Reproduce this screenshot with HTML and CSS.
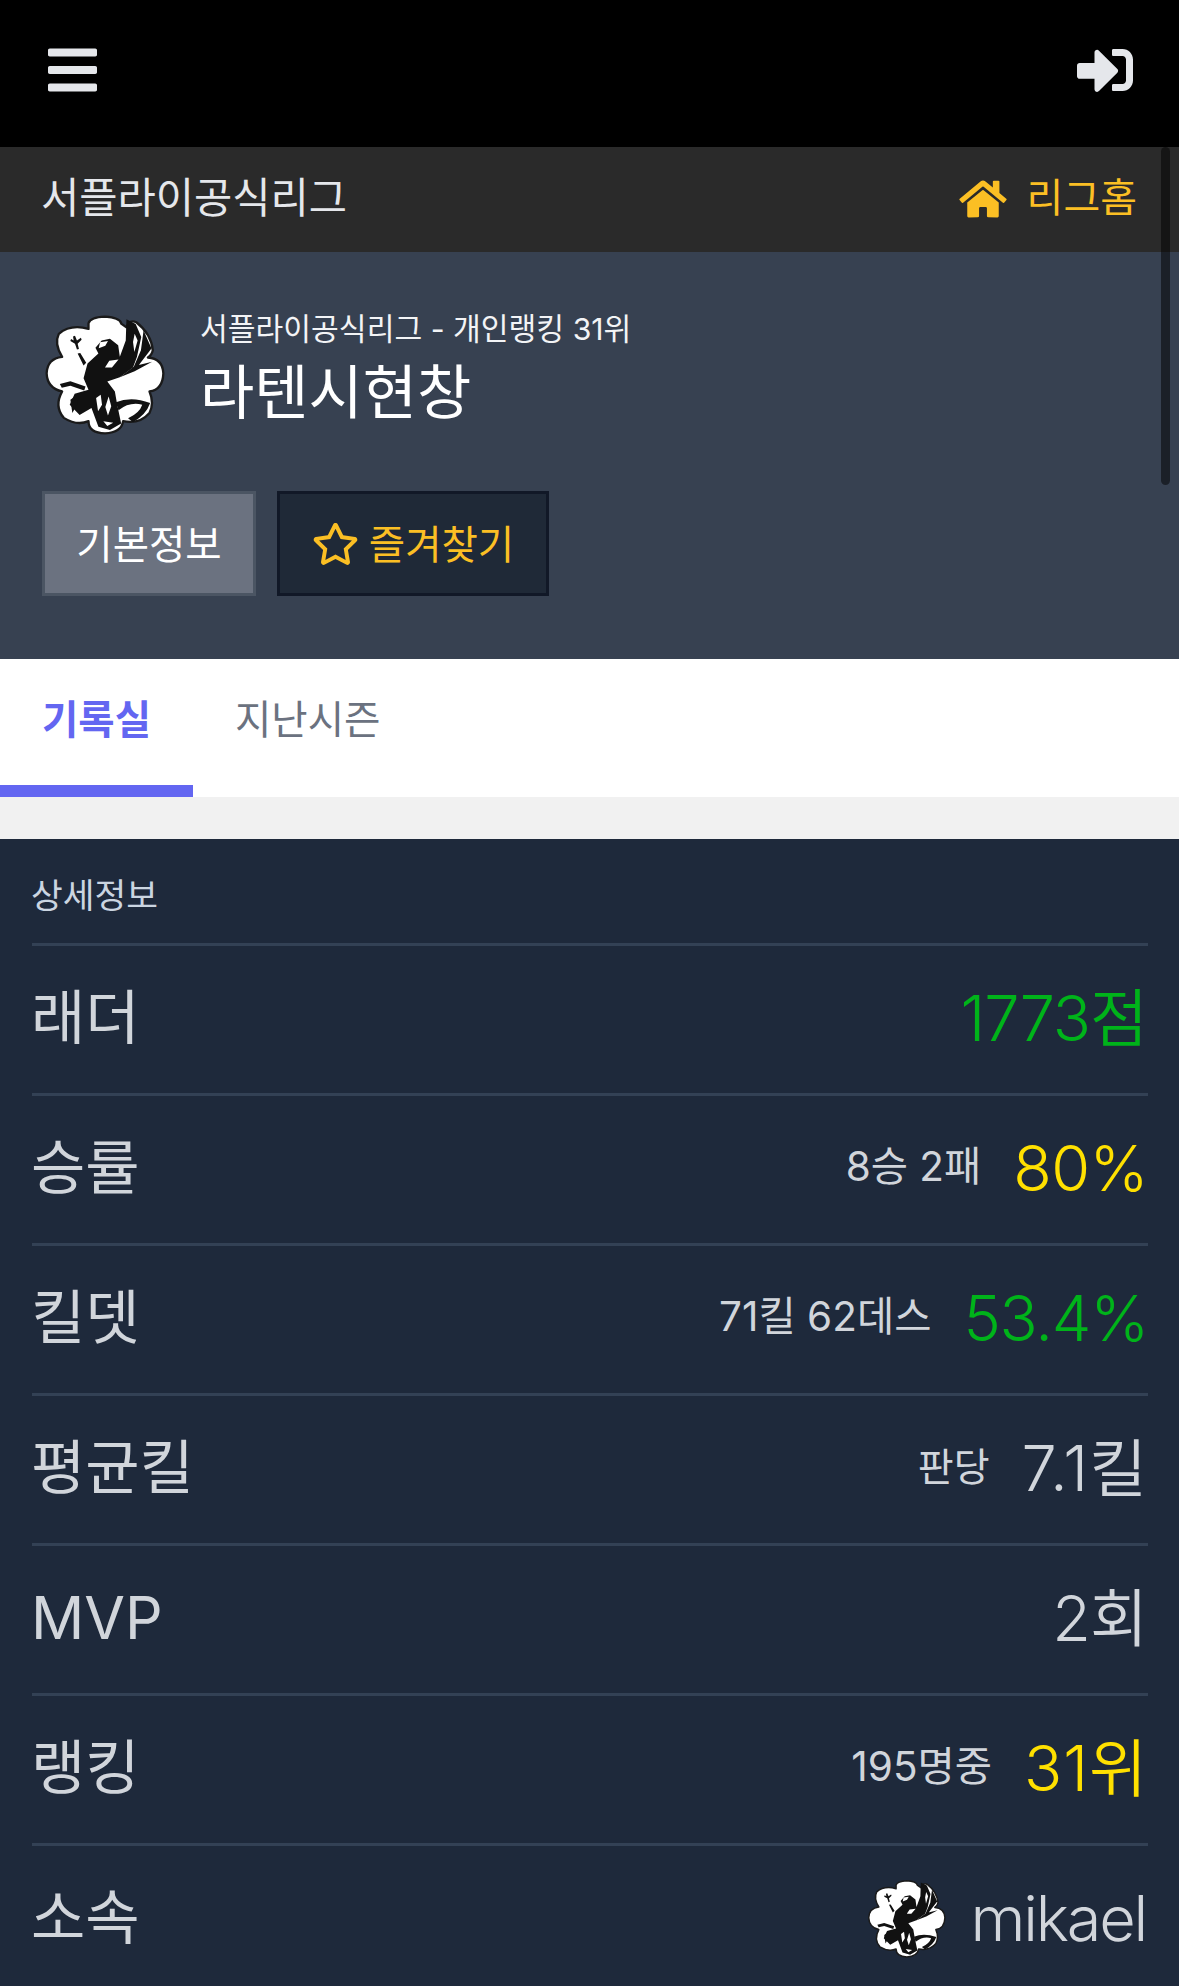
FILE: index.html
```html
<!DOCTYPE html>
<html lang="ko">
<head>
  <meta charset="UTF-8" />
  <meta name="viewport" content="width=device-width, initial-scale=1.0"/>
  <title>라텐시현창 - 서플라이공식리그</title>
  <link rel="stylesheet" href="styles.css">
</head>
<body>

  <!-- griffin emblem, used twice -->
  <svg class="defs" width="0" height="0" aria-hidden="true">
    <symbol id="emblem" viewBox="70 70 367 367">
      <path fill="#fff" stroke="#1a1a1a" stroke-width="7" stroke-linejoin="round" d="M205 98Q210 80 255 78Q300 80 305 100L320 110Q330 85 350 95Q395 130 400 180Q397 195 385 202Q430 205 432 250Q430 300 390 305Q405 340 390 370Q360 405 310 395Q305 430 255 432Q205 430 205 395Q170 410 130 385Q100 350 125 305Q80 295 78 250Q80 205 125 200Q100 160 115 130Q150 100 205 115Z"/>
      <path fill="#111" d="M226 172L245 150L270 145L295 165L300 200L318 150L320 86L348 100L365 140L352 200L340 232L300 262L262 275L285 305L292 345L304 402L270 422L235 412L214 355L178 376L148 345L163 312L205 300L190 265L202 220L235 190Z"/>
      <path fill="#111" d="M372 120L396 175L352 232L340 235L364 180ZM398 215L345 244L300 262L345 228ZM288 338Q335 318 392 340Q380 375 340 398L325 386Q360 370 368 345Q330 335 296 362ZM172 190L180 188L198 218L190 226ZM158 138L164 136L170 150L182 142L184 148L172 160L176 176L170 178L164 160L150 152L152 146L160 150ZM118 282L150 274L196 290L192 302L150 288L124 294ZM150 330L178 310L170 345L156 370Z"/>
      <path fill="#fff" d="M240 156L264 152L256 166L236 174ZM345 130L354 150L344 185L340 155ZM268 212L296 208L276 232L255 232ZM228 325L242 315L246 345L234 365ZM266 320L274 350L264 378L256 352ZM250 395L280 400L262 410Z"/>
    </symbol>
  </svg>

  <header class="topbar">
    <svg class="icon-bars" viewBox="0 0 448 512"><path d="M16 132h416c8.837 0 16-7.163 16-16V76c0-8.837-7.163-16-16-16H16C7.163 60 0 67.163 0 76v40c0 8.837 7.163 16 16 16zm0 160h416c8.837 0 16-7.163 16-16v-40c0-8.837-7.163-16-16-16H16c-8.837 0-16 7.163-16 16v40c0 8.837 7.163 16 16 16zm0 160h416c8.837 0 16-7.163 16-16v-40c0-8.837-7.163-16-16-16H16c-8.837 0-16 7.163-16 16v40c0 8.837 7.163 16 16 16z"/></svg>
    <svg class="icon-login" viewBox="0 0 512 512"><path d="M416 448h-84c-6.6 0-12-5.4-12-12v-40c0-6.6 5.4-12 12-12h84c17.7 0 32-14.3 32-32V160c0-17.7-14.3-32-32-32h-84c-6.6 0-12-5.4-12-12V76c0-6.6 5.4-12 12-12h84c53 0 96 43 96 96v192c0 53-43 96-96 96zm-47-201L201 79c-15-15-41-4.5-41 17v96H24c-13.3 0-24 10.7-24 24v96c0 13.3 10.7 24 24 24h136v96c0 21.5 26 32 41 17l168-168c9.3-9.4 9.3-24.6 0-34z"/></svg>
  </header>

  <div class="league-bar">
    <span class="league-name">서플라이공식리그</span>
    <a class="league-home">
      <svg class="icon-home" viewBox="0 0 576 512"><path d="M280.37 148.26L96 300.11V464a16 16 0 0 0 16 16l112.06-.29a16 16 0 0 0 15.92-16V368a16 16 0 0 1 16-16h64a16 16 0 0 1 16 16v95.64a16 16 0 0 0 16 16.05L464 480a16 16 0 0 0 16-16V300L295.67 148.26a12.19 12.19 0 0 0-15.3 0zM571.6 251.47L488 182.56V44.05a12 12 0 0 0-12-12h-56a12 12 0 0 0-12 12v72.61L318.47 43a48 48 0 0 0-61 0L4.34 251.47a12 12 0 0 0-1.6 16.9l25.5 31A12 12 0 0 0 45.15 301l235.22-193.74a12.19 12.19 0 0 1 15.3 0L530.9 301a12 12 0 0 0 16.9-1.6l25.5-31a12 12 0 0 0-1.7-16.93z"/></svg>
      리그홈
    </a>
  </div>

  <section class="profile">
    <div class="profile-top">
      <svg class="emblem-big"><use href="#emblem"/></svg>
      <div>
        <div class="profile-sub">서플라이공식리그 - 개인랭킹 31위</div>
        <div class="profile-name">라텐시현창</div>
      </div>
    </div>
    <div class="profile-btns">
      <a class="btn btn-info">기본정보</a>
      <a class="btn btn-fav">
        <svg class="icon-star" viewBox="0 0 576 512"><path d="M528.1 171.5L382 150.2 316.7 17.8c-11.7-23.6-45.6-23.9-57.4 0L194 150.2 47.9 171.5c-26.2 3.8-36.7 36.1-17.7 54.6l105.7 103-25 145.5c-4.5 26.3 23.2 46 46.4 33.7L288 439.6l130.7 68.7c23.2 12.2 50.9-7.4 46.4-33.7l-25-145.5 105.7-103c19-18.5 8.5-50.8-17.7-54.6zM388.6 312.3l23.7 138.4L288 385.4l-124.3 65.3 23.7-138.4-100.6-98 139-20.2 62.2-126 62.2 126 139 20.2-100.6 98z"/></svg>
        즐겨찾기
      </a>
    </div>
  </section>

  <nav class="tabs">
    <a class="tab active">기록실</a>
    <a class="tab">지난시즌</a>
  </nav>

  <section class="detail">
    <h3 class="detail-title">상세정보</h3>
    <div class="row">
      <span class="row-label">래더</span>
      <span class="row-value"><b class="val green">1773점</b></span>
    </div>
    <div class="row">
      <span class="row-label">승률</span>
      <span class="row-value"><small>8승 2패</small><b class="val latin yellow">80%</b></span>
    </div>
    <div class="row">
      <span class="row-label">킬뎃</span>
      <span class="row-value"><small>71킬 62데스</small><b class="val latin tight green">53.4%</b></span>
    </div>
    <div class="row">
      <span class="row-label">평균킬</span>
      <span class="row-value"><small class="per">판당</small><b class="val wide">7.1킬</b></span>
    </div>
    <div class="row">
      <span class="row-label latin">MVP</span>
      <span class="row-value"><b class="val">2회</b></span>
    </div>
    <div class="row">
      <span class="row-label">랭킹</span>
      <span class="row-value"><small>195명중</small><b class="val wide yellow">31위</b></span>
    </div>
    <div class="row">
      <span class="row-label">소속</span>
      <span class="row-value"><svg class="emblem-small"><use href="#emblem"/></svg><b class="val latin team">mikael</b></span>
    </div>
  </section>

  <div class="scroll-thumb"></div>

</body>
</html>
```

FILE: styles.css
```css
html, body {
  height: 1986px;
  overflow: hidden;
}

body {
  margin: 0;
  position: relative;
  background: #1e293b;
  color: #fff;
  font-family: Inter, 'Noto Sans CJK KR', sans-serif;
}

.defs {
  position: absolute;
}

.topbar {
  height: 147px;
  background: #000;
  display: flex;
  justify-content: space-between;
  align-items: center;
  padding: 0 46px 8px 48px;
  box-sizing: border-box;
}

.topbar svg {
  fill: #e5e7eb;
  height: 56px;
}

.icon-bars {
  width: 49px;
}

.icon-login {
  width: 56px;
}

.league-bar {
  height: 105px;
  background: #2a2a2a;
  display: flex;
  justify-content: space-between;
  align-items: center;
  padding: 0 42px 10px 41px;
  box-sizing: border-box;
}

.league-name {
  font-size: 41.6px;
  color: #e5e7eb;
}

.league-home {
  display: flex;
  align-items: center;
  gap: 20px;
  font-size: 40px;
  color: #fbbf24;
}

.icon-home {
  width: 48px;
  height: 42px;
  fill: #fbbf24;
  margin-top: 8px;
}

.profile {
  height: 407px;
  background: #374151;
  padding: 62px 42px 0 45px;
  box-sizing: border-box;
}

.profile-top {
  display: flex;
  align-items: center;
  gap: 35px;
}

.emblem-big {
  width: 121px;
  height: 121px;
  margin-left: -1px;
  filter: blur(0.6px);
}

.profile-sub {
  font-size: 30.2px;
  line-height: 26px;
  margin-bottom: 11px;
  color: #f3f4f6;
}

.profile-name {
  font-size: 59px;
  line-height: 80px;
}

.profile-btns {
  display: flex;
  gap: 21px;
  margin: 56px 0 0 -3px;
}

.btn {
  height: 105px;
  box-sizing: border-box;
  border: 3px solid;
  padding-bottom: 4px;
  display: flex;
  align-items: center;
  justify-content: center;
  gap: 10px;
  font-size: 39.5px;
}

.btn-info {
  width: 214px;
  background: #6b7280;
  border-color: #4b5563;
}

.btn-fav {
  width: 272px;
  background: #1f2937;
  border-color: #111827;
  color: #fbbf24;
}

.icon-star {
  width: 47px;
  height: 42px;
  fill: #fbbf24;
  margin-top: 4px;
}

.tabs {
  height: 138px;
  background: #fff;
  display: flex;
}

.tab {
  height: 138px;
  box-sizing: border-box;
  padding: 0 42px;
  line-height: 122px;
  font-size: 39.5px;
  color: #6b7280;
}

.tab.active {
  color: #6366f1;
  font-weight: 700;
  border-bottom: 12px solid #6366f1;
}

.detail {
  padding: 0 31px 0 32px;
  border-top: 42px solid #f1f1f1;
  background: #1e293b;
  background-clip: padding-box;
}

.detail-title {
  margin: 0 0 0 -1px;
  height: 104px;
  line-height: 114px;
  font-size: 34.5px;
  font-weight: 400;
  color: #cbd5e1;
}

.row {
  height: 150px;
  box-sizing: border-box;
  border-top: 3px solid #334155;
  padding-bottom: 12px;
  display: flex;
  justify-content: space-between;
  align-items: center;
  color: #d1d5db;
}

.row-label {
  font-size: 59px;
  margin-left: -1px;
}

.row-value {
  display: flex;
  align-items: center;
  gap: 32px;
}

.row-value small {
  font-size: 40.5px;
}

.row-value small.per {
  font-size: 39px;
}

.val {
  font-size: 63px;
  font-weight: 350;
  letter-spacing: -1px;
  margin-right: 1px;
}

.val.wide {
  letter-spacing: 1px;
  margin-right: 0;
}

.latin {
  margin-top: 8px;
}

.val.latin {
  letter-spacing: -0.6px;
  margin-right: 0;
}

.val.tight {
  letter-spacing: -1.2px;
}

.val.team {
  letter-spacing: -2.2px;
  margin-right: 2px;
}

.green {
  color: #00b31a;
}

.yellow {
  color: #ffe000;
}

.emblem-small {
  width: 79px;
  height: 79px;
  margin: 10px -8px 0 0;
  filter: blur(0.4px);
}

.scroll-thumb {
  position: absolute;
  left: 1161px;
  top: 147px;
  width: 9px;
  height: 338px;
  border-radius: 5px;
  background: rgba(0, 0, 0, 0.5);
}
```
